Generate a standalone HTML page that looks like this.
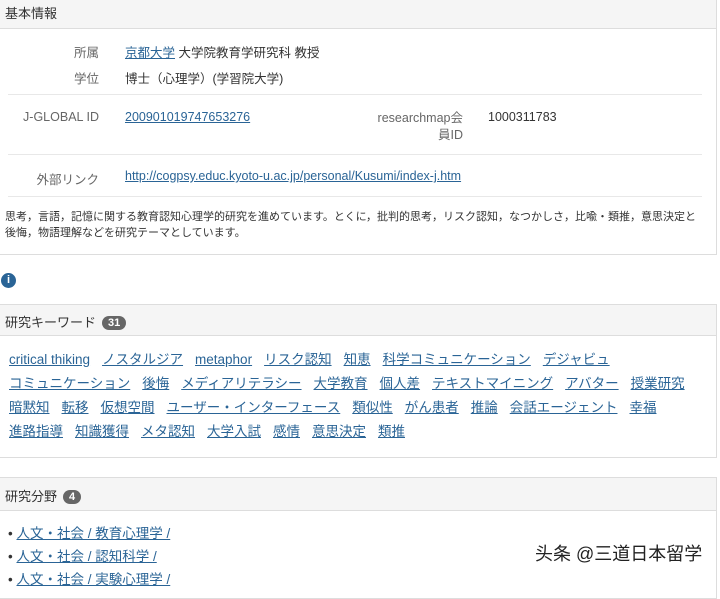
<!DOCTYPE html>
<html><head><meta charset="utf-8"><style>
body{margin:0;width:720px;height:578px;overflow:hidden;background:#fff;font-family:"Liberation Sans","Noto Sans CJK JP",sans-serif;font-size:12.5px;color:#333;position:relative}
.a{position:absolute;white-space:nowrap}
a,.l{color:#2a6496;text-decoration:underline}
.pan{position:absolute;left:0;width:716px;border:1px solid #ddd;border-left:none}
.hd{background:#f5f5f5;border-bottom:1px solid #ddd;box-sizing:border-box}
.lab{color:#666;text-align:right}
.hr{position:absolute;left:8px;width:694px;border-top:1px solid #e8e8e8}
.kw span{display:inline-block;margin-right:12px;text-decoration:underline}
.badge{display:inline-block;background:#666;color:#fff;border-radius:8px;font-size:11px;font-weight:bold;padding:1px 6px;margin-left:6px;vertical-align:1px}
</style></head><body>
<div class="pan" style="top:-1px;height:254px"><div class="hd" style="height:29px"></div></div>
<div class="a" style="left:5px;top:3px;font-size:13px">基本情報</div>
<div class="a lab" style="left:40px;width:59px;top:42px">所属</div>
<div class="a" style="left:125px;top:42px"><span class="l">京都大学</span> 大学院教育学研究科 教授</div>
<div class="a lab" style="left:40px;width:59px;top:68px">学位</div>
<div class="a" style="left:125px;top:68px">博士（心理学）(学習院大学)</div>
<div class="hr" style="top:94px"></div>
<div class="a lab" style="left:0;width:99px;top:110px">J-GLOBAL ID</div>
<div class="a l" style="left:125px;top:110px">200901019747653276</div>
<div class="a lab" style="left:370px;width:93px;top:110px;white-space:normal;line-height:17px">researchmap会員ID</div>
<div class="a" style="left:488px;top:110px">1000311783</div>
<div class="hr" style="top:154px"></div>
<div class="a lab" style="left:0;width:99px;top:169px">外部リンク</div>
<div class="a l" style="left:125px;top:169px">http://cogpsy.educ.kyoto-u.ac.jp/personal/Kusumi/index-j.htm</div>
<div class="hr" style="top:196px"></div>
<div class="a" style="left:5px;top:209px;font-size:11px;line-height:16px;white-space:normal;width:700px">思考，言語，記憶に関する教育認知心理学的研究を進めています。とくに，批判的思考，リスク認知，なつかしさ，比喩・類推，意思決定と後悔，物語理解などを研究テーマとしています。</div>
<div class="a" style="left:1px;top:273px;width:15px;height:15px;border-radius:50%;background:#2a6496;color:#fff;font-size:11px;font-weight:bold;text-align:center;line-height:15px">i</div>
<div class="pan" style="top:304px;height:152px"><div class="hd" style="height:31px"></div></div>
<div class="a" style="left:5px;top:312px;font-size:13px">研究キーワード<span class="badge">31</span></div>
<div class="a l kw" style="left:9px;top:348px;font-size:13.5px;line-height:24px;text-decoration:none"><span>critical thiking</span><span>ノスタルジア</span><span>metaphor</span><span>リスク認知</span><span>知恵</span><span>科学コミュニケーション</span><span>デジャビュ</span><br><span>コミュニケーション</span><span>後悔</span><span>メディアリテラシー</span><span>大学教育</span><span>個人差</span><span>テキストマイニング</span><span>アバター</span><span>授業研究</span><br><span>暗黙知</span><span>転移</span><span>仮想空間</span><span>ユーザー・インターフェース</span><span>類似性</span><span>がん患者</span><span>推論</span><span>会話エージェント</span><span>幸福</span><br><span>進路指導</span><span>知識獲得</span><span>メタ認知</span><span>大学入試</span><span>感情</span><span>意思決定</span><span>類推</span></div>
<div class="pan" style="top:477px;height:120px"><div class="hd" style="height:33px"></div></div>
<div class="a" style="left:5px;top:486px;font-size:13px">研究分野<span class="badge">4</span></div>
<div class="a" style="left:8px;top:522px;font-size:13.5px;line-height:23px">• <span class="l">人文・社会 / 教育心理学 /</span><br>• <span class="l">人文・社会 / 認知科学 /</span><br>• <span class="l">人文・社会 / 実験心理学 /</span></div>
<div class="a" style="left:535px;top:540px;font-size:18px;color:#222;text-shadow:1px 1px 0 #fff,-1px -1px 0 #fff">头条 @三道日本留学</div>
</body></html>
